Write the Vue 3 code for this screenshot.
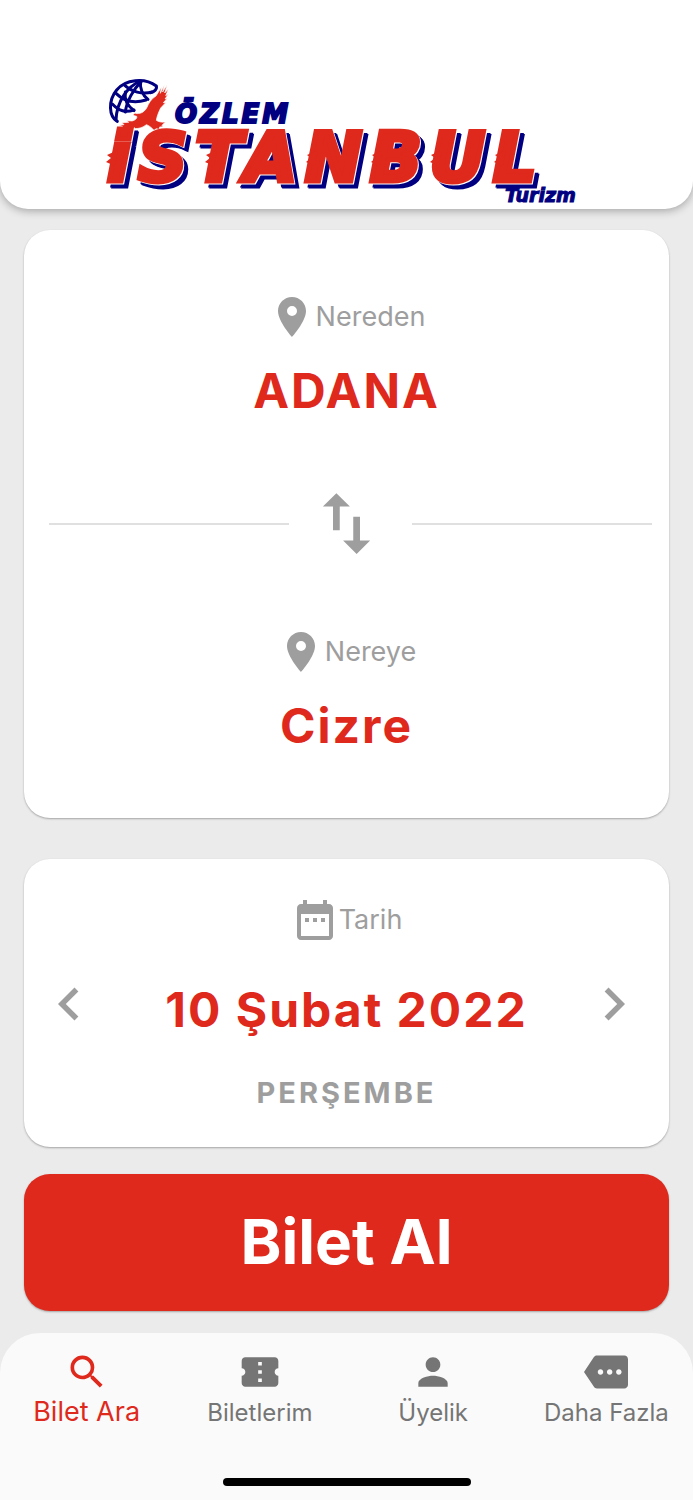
<script setup>
import { ref, computed } from 'vue'

const from = ref('ADANA')
const to = ref('Cizre')
const date = ref(new Date(2022, 1, 10))
const activeTab = ref('search')

const dateText = computed(() =>
  `${date.value.getDate()} ${months[date.value.getMonth()]} ${date.value.getFullYear()}`
)
const dayText = computed(() => days[date.value.getDay()])

const months = [
  'Ocak', 'Şubat', 'Mart', 'Nisan', 'Mayıs', 'Haziran',
  'Temmuz', 'Ağustos', 'Eylül', 'Ekim', 'Kasım', 'Aralık'
]
const days = ['PAZAR', 'PAZARTESİ', 'SALI', 'ÇARŞAMBA', 'PERŞEMBE', 'CUMA', 'CUMARTESİ']

// Left stems of the logo letters that carry a wind spike
const spikes = [16, 115, 216, 281, 340, 404]

const pinIcon = 'M12 2C8.13 2 5 5.13 5 9c0 5.25 7 13 7 13s7-7.75 7-13c0-3.87-3.13-7-7-7zm0 9.5a2.5 2.5 0 0 1 0-5 2.5 2.5 0 0 1 0 5z'

const tabs = [
  {
    id: 'search',
    label: 'Bilet Ara',
    icon: 'M15.5 14h-.79l-.28-.27A6.471 6.471 0 0 0 16 9.5 6.5 6.5 0 1 0 9.5 16c1.61 0 3.09-.59 4.23-1.57l.27.28v.79l5 4.99L20.49 19l-4.99-5zm-6 0C7.01 14 5 11.99 5 9.5S7.01 5 9.5 5 14 7.01 14 9.5 11.99 14 9.5 14z'
  },
  {
    id: 'tickets',
    label: 'Biletlerim',
    icon: 'M22 10V6c0-1.11-.9-2-2-2H4c-1.1 0-1.99.89-1.99 2v4c1.1 0 1.99.9 1.99 2s-.89 2-2 2v4c0 1.1.9 2 2 2h16c1.1 0 2-.9 2-2v-4c-1.1 0-2-.9-2-2s.9-2 2-2zm-9 7.5h-2v-2h2v2zm0-4.5h-2v-2h2v2zm0-4.5h-2v-2h2v2z'
  },
  {
    id: 'account',
    label: 'Üyelik',
    icon: 'M12 12c2.21 0 4-1.79 4-4s-1.79-4-4-4-4 1.79-4 4 1.79 4 4 4zm0 2c-2.67 0-8 1.34-8 4v2h16v-2c0-2.66-5.33-4-8-4z'
  },
  {
    id: 'more',
    label: 'Daha Fazla',
    icon: 'M22 3H7c-.69 0-1.23.35-1.59.88L0 12l5.41 8.11c.36.53.97.89 1.66.89H22c1.1 0 2-.9 2-2V5c0-1.1-.9-2-2-2zM9 13.5c-.83 0-1.5-.67-1.5-1.5s.67-1.5 1.5-1.5 1.5.67 1.5 1.5-.67 1.5-1.5 1.5zm5 0c-.83 0-1.5-.67-1.5-1.5s.67-1.5 1.5-1.5 1.5.67 1.5 1.5-.67 1.5-1.5 1.5zm5 0c-.83 0-1.5-.67-1.5-1.5s.67-1.5 1.5-1.5 1.5.67 1.5 1.5-.67 1.5-1.5 1.5z'
  }
]

function swap() {
  const old = from.value
  from.value = to.value
  to.value = old
}

function moveDay(step) {
  const next = new Date(date.value)
  next.setDate(next.getDate() + step)
  date.value = next
}
</script>

<template>
  <div class="page">
    <header class="header">
      <svg class="logo" viewBox="0 0 500 136" role="img" aria-label="Özlem İstanbul Turizm">
        <g transform="scale(0.3333) translate(-3 0)">
          <!-- Globe -->
          <g class="globe">
            <path d="M64 154C38 140 36 92 62 60C88 28 146 22 181 48C184 58 174 66 163 68" />
            <path d="M49 102C70 124 88 128 114 120" />
            <path d="M60 70C86 96 118 100 150 90" />
            <path d="M84 44C106 66 140 74 168 66" />
            <path d="M132 34C96 48 62 94 60 150" />
            <path d="M136 34C112 58 92 94 88 126" />
            <path d="M134 34C130 54 140 76 156 88" />
            <path d="M88 66C84 90 98 110 114 122" />
          </g>
          <!-- Eagle -->
          <path
            class="eagle"
            d="M68 165L84 164L78 158L98 157L92 152L108 153C118 151 126 143 121 138C112 139 108 132 118 130C132 133 144 127 152 114C158 100 166 86 180 78L196 52L193 70L205 45L200 66L213 46L206 69L217 58L209 77L217 73L207 87L214 85L202 98L209 98L194 114C187 128 183 139 181 151C190 157 199 157 208 156L198 166L201 170L191 171L190 178L181 176L174 181C166 172 158 166 151 164C142 171 128 178 112 175L101 180L98 175L86 179L88 172L74 176L80 169Z"
          />
        </g>
        <text class="logo-top" x="78" y="53">ÖZLEM</text>
        <g class="logo-name">
          <text class="logo-main" x="10" y="111">iSTANBUL</text>
          <path
            v-for="x in spikes"
            :key="x"
            :transform="`translate(${x} 81)`"
            d="M5 -1L-6 4L-2 7L-7 11L2 15Z"
          />
        </g>
        <text class="logo-sub" x="408" y="132">Turizm</text>
      </svg>
    </header>

    <main class="content">
      <section class="card route">
        <button class="place" type="button">
          <span class="caption">
            <svg class="caption-icon" viewBox="0 0 24 24" aria-hidden="true"><path :d="pinIcon" /></svg>
            <span>Nereden</span>
          </span>
          <span class="value">{{ from }}</span>
        </button>

        <div class="divider">
          <button class="swap" type="button" aria-label="Değiştir" @click="swap">
            <svg viewBox="0 0 24 24" aria-hidden="true">
              <path d="M16 17.01V10h-2v7.01h-3L15 21l4-3.99h-3zM9 3L5 6.99h3V14h2V6.99h3L9 3z" />
            </svg>
          </button>
        </div>

        <button class="place" type="button">
          <span class="caption">
            <svg class="caption-icon" viewBox="0 0 24 24" aria-hidden="true"><path :d="pinIcon" /></svg>
            <span>Nereye</span>
          </span>
          <span class="value">{{ to }}</span>
        </button>
      </section>

      <section class="card date">
        <button class="arrow arrow--prev" type="button" aria-label="Önceki gün" @click="moveDay(-1)">
          <svg viewBox="0 0 24 24" aria-hidden="true"><path d="M15.41 7.41L14 6l-6 6 6 6 1.41-1.41L10.83 12z" /></svg>
        </button>
        <button class="day" type="button">
          <span class="caption">
            <svg class="caption-icon" viewBox="0 0 24 24" aria-hidden="true">
              <path d="M9 11H7v2h2v-2zm4 0h-2v2h2v-2zm4 0h-2v2h2v-2zm2-7h-1V2h-2v2H8V2H6v2H5c-1.11 0-1.99.9-1.99 2L3 20c0 1.1.89 2 2 2h14c1.1 0 2-.9 2-2V6c0-1.1-.9-2-2-2zm0 16H5V9h14v11z" />
            </svg>
            <span>Tarih</span>
          </span>
          <span class="value">{{ dateText }}</span>
          <span class="weekday">{{ dayText }}</span>
        </button>
        <button class="arrow" type="button" aria-label="Sonraki gün" @click="moveDay(1)">
          <svg viewBox="0 0 24 24" aria-hidden="true"><path d="M10 6L8.59 7.41 13.17 12l-4.58 4.59L10 18l6-6z" /></svg>
        </button>
      </section>

      <button class="buy" type="button">Bilet Al</button>
    </main>

    <footer class="footer">
      <nav class="tabs">
        <a
          v-for="tab in tabs"
          :key="tab.id"
          class="tab"
          :class="{ 'tab--active': tab.id === activeTab }"
          :href="'#' + tab.id"
          @click.prevent="activeTab = tab.id"
        >
          <svg class="tab-icon" viewBox="0 0 24 24" aria-hidden="true"><path :d="tab.icon" /></svg>
          <span>{{ tab.label }}</span>
        </a>
      </nav>
      <div class="home-bar"></div>
    </footer>
  </div>
</template>

<style>
body {
  margin: 0;
  background: #ebebeb;
}
</style>

<style scoped>
.page {
  --red: #de291c;
  --navy: #000080;
  --grey: #9e9e9e;
  min-height: 100vh;
  display: flex;
  flex-direction: column;
  background: #ebebeb;
  font-family: Inter, "Noto Sans", sans-serif;
}

button {
  margin: 0;
  padding: 0;
  border: 0;
  background: none;
  color: inherit;
  font: inherit;
  cursor: pointer;
}

svg {
  display: block;
  fill: currentColor;
}

/* ---- Header ---- */
.header {
  display: flex;
  justify-content: center;
  padding: 70px 24px 3px;
  background: #fff;
  border-radius: 0 0 28px 28px;
  box-shadow: 0 2px 8px rgba(0, 0, 0, 0.3);
}

.logo {
  width: 100%;
  max-width: 500px;
  overflow: visible;
}

.globe {
  fill: none;
  stroke: var(--navy);
  stroke-width: 9;
  stroke-linecap: round;
}

.eagle {
  fill: var(--red);
  stroke: #fff;
  stroke-width: 2;
}

.logo text {
  font-family: "DejaVu Sans", sans-serif;
  font-weight: 700;
  font-style: italic;
  fill: var(--navy);
  stroke: var(--navy);
}

.logo .logo-top {
  font-size: 26px;
  letter-spacing: 3px;
  stroke-width: 2px;
}

.logo-name {
  fill: var(--red);
  filter: drop-shadow(1px 1px 0 #fff) drop-shadow(4px 4px 0 var(--navy));
}

.logo .logo-main {
  font-size: 68px;
  letter-spacing: 8px;
  fill: var(--red);
  stroke: var(--red);
  stroke-width: 5px;
}

.logo .logo-sub {
  font-size: 19px;
  stroke-width: 1px;
}

/* ---- Cards ---- */
.content {
  display: flex;
  flex-direction: column;
  padding: 21px 24px 22px;
}

.card {
  background: #fff;
  border-radius: 26px;
  box-shadow: 0 1px 2px rgba(0, 0, 0, 0.3);
}

.route {
  display: flex;
  flex-direction: column;
  padding: 63px 0 62px;
}

.place,
.day {
  display: flex;
  flex-direction: column;
  align-items: center;
}

.caption {
  display: flex;
  align-items: center;
  justify-content: center;
  color: var(--grey);
  font-size: 27px;
  line-height: 48px;
}

.caption-icon {
  width: 48px;
  height: 48px;
}

.value {
  margin-top: 20px;
  color: var(--red);
  font-size: 48px;
  font-weight: 700;
  line-height: 60px;
  letter-spacing: 2px;
}

.divider {
  display: flex;
  align-items: center;
  margin: 62px 0 64px;
  padding: 0 17px 0 25px;
}

.divider::before,
.divider::after {
  content: '';
  flex: 1;
  height: 2px;
  background: #e0e0e0;
}

.swap {
  padding: 0 25px 0 17px;
  color: var(--grey);
}

.swap svg {
  width: 81px;
  height: 81px;
}

/* ---- Date ---- */
.date {
  display: grid;
  grid-template-columns: 88px 1fr 88px;
  align-items: center;
  margin-top: 41px;
  padding: 37px 0 35px;
}

.arrow {
  color: var(--grey);
}

.arrow--prev {
  padding-left: 12px;
}

.arrow svg {
  width: 66px;
  height: 66px;
}

.date .value {
  margin-top: 36px;
}

.weekday {
  margin-top: 34px;
  color: var(--grey);
  font-size: 29px;
  font-weight: 700;
  line-height: 38px;
  letter-spacing: 3px;
}

/* ---- Buy button ---- */
.buy {
  margin-top: 27px;
  padding: 28px 0 29px;
  border-radius: 26px;
  background: var(--red);
  box-shadow: 0 1px 2px rgba(0, 0, 0, 0.3);
  color: #fff;
  font-size: 62px;
  font-weight: 700;
  line-height: 80px;
}

/* ---- Bottom bar ---- */
.footer {
  flex: 1;
  display: flex;
  flex-direction: column;
  justify-content: space-between;
  align-items: center;
  padding: 17px 0 14px;
  background: #fafafa;
  border-radius: 40px 40px 0 0;
}

.tabs {
  width: 100%;
  display: grid;
  grid-template-columns: repeat(4, 1fr);
}

.tab {
  display: flex;
  flex-direction: column;
  align-items: center;
  color: #757575;
  font-size: 24px;
  line-height: 38px;
  text-decoration: none;
  white-space: nowrap;
}

.tab--active {
  color: var(--red);
  font-size: 27px;
  line-height: 36px;
}

.tab-icon {
  width: 44px;
  height: 44px;
}

.home-bar {
  width: 248px;
  height: 8px;
  border-radius: 4px;
  background: #000;
}
</style>
